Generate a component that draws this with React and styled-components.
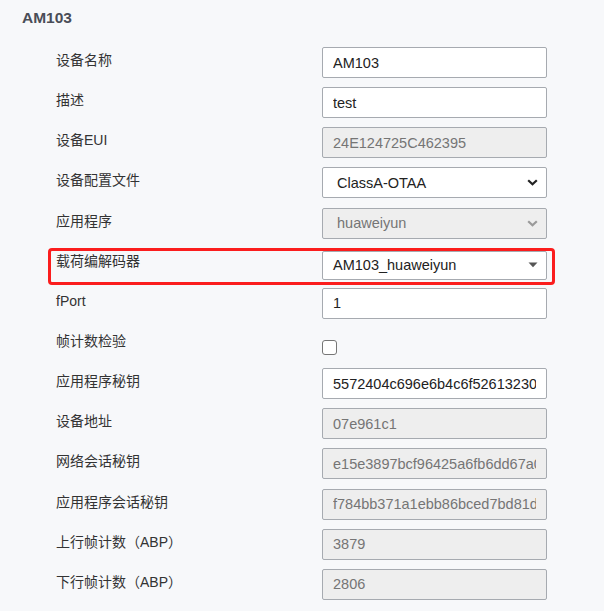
import styled, { createGlobalStyle, css } from 'styled-components'

const GlobalStyle = createGlobalStyle`
  body {
    margin: 0;
    background-color: #f7f8fa;
    font-family: "Liberation Sans", "Noto Sans CJK SC", sans-serif;
    color: #333;
  }
`

const Page = styled.div`
  padding: 8px 0 0 22px;
  width: 582px;
`

const Title = styled.h3`
  margin: 0 0 19px 0;
  font-size: 15.5px;
  line-height: 20px;
  font-weight: 700;
  color: #4a4d57;
`

const Form = styled.div`
  display: flex;
  flex-direction: column;
  gap: 9.15px;
  padding-left: 34px;
`

const Row = styled.div`
  position: relative;
  display: flex;
  align-items: flex-start;
  width: 491px;
  height: 31px;

  ${({ $highlight }) => $highlight && css`
    &::before {
      content: '';
      position: absolute;
      top: 0;
      bottom: -6px;
      left: -8px;
      right: -8px;
      border: 3px solid #fb1d1d;
      border-radius: 4px;
      pointer-events: none;
    }
  `}
`

const Label = styled.label`
  width: 266px;
  flex-shrink: 0;
  font-size: 14px;
  line-height: 20px;
  padding-top: 3px;
  color: #333;
  white-space: nowrap;
`

const fieldBase = css`
  box-sizing: border-box;
  width: 225px;
  height: 31px;
  border: 1px solid #a6aab0;
  border-radius: 2px;
  font-family: "Liberation Sans", "Noto Sans CJK SC", sans-serif;
  font-size: 14.5px;
  background-color: ${({ disabled, $disabled }) => (disabled || $disabled ? '#eeeeee' : '#fff')};
  color: ${({ disabled, $disabled }) => (disabled || $disabled ? '#757575' : '#222')};
`

const Input = styled.input`
  ${fieldBase}
  padding: 0 10px;
  outline: none;
`

const SelectBox = styled.div`
  ${fieldBase}
  display: flex;
  align-items: center;
  justify-content: space-between;
  padding: 0 8px 0 ${({ $custom }) => ($custom ? '10px' : '14px')};
  ${({ $custom }) => $custom && css`
    margin-top: 3px;
    height: 29px;
  `}
`

const Check = styled.input`
  appearance: none;
  box-sizing: border-box;
  width: 14.5px;
  height: 14.5px;
  margin: 12.5px 0 0 0;
  border: 1px solid #767676;
  border-radius: 3px;
  background: #fff;
`

function Chevron({ muted }) {
  return (
    <svg width="11" height="7" viewBox="0 0 11 7">
      <path d="M1.2 1.2 L5.5 5.3 L9.8 1.2" fill="none" stroke={muted ? '#9a9a9a' : '#222'} strokeWidth="2.2" />
    </svg>
  )
}

function Caret() {
  return (
    <svg width="10" height="6" viewBox="0 0 10 6">
      <path d="M0.5 0.5 L9.5 0.5 L5 5.2 Z" fill="#555" />
    </svg>
  )
}

function Field({ label, value, disabled }) {
  return (
    <Row>
      <Label>{label}</Label>
      <Input value={value} disabled={disabled} readOnly />
    </Row>
  )
}

export default function App() {
  return (
    <>
      <GlobalStyle />
      <Page>
        <Title>AM103</Title>
        <Form>
          <Field label="设备名称" value="AM103" />
          <Field label="描述" value="test" />
          <Field label="设备EUI" value="24E124725C462395" disabled />
          <Row>
            <Label>设备配置文件</Label>
            <SelectBox>
              <span>ClassA-OTAA</span>
              <Chevron />
            </SelectBox>
          </Row>
          <Row>
            <Label>应用程序</Label>
            <SelectBox $disabled>
              <span>huaweiyun</span>
              <Chevron muted />
            </SelectBox>
          </Row>
          <Row $highlight>
            <Label>载荷编解码器</Label>
            <SelectBox $custom>
              <span>AM103_huaweiyun</span>
              <Caret />
            </SelectBox>
          </Row>
          <Field label="fPort" value="1" />
          <Row>
            <Label>帧计数检验</Label>
            <Check type="checkbox" />
          </Row>
          <Field label="应用程序秘钥" value="5572404c696e6b4c6f526132303138231" />
          <Field label="设备地址" value="07e961c1" disabled />
          <Field label="网络会话秘钥" value="e15e3897bcf96425a6fb6dd67a0c1f2b" disabled />
          <Field label="应用程序会话秘钥" value="f784bb371a1ebb86bced7bd81d3c5a0e" disabled />
          <Field label="上行帧计数（ABP）" value="3879" disabled />
          <Field label="下行帧计数（ABP）" value="2806" disabled />
        </Form>
      </Page>
    </>
  )
}
